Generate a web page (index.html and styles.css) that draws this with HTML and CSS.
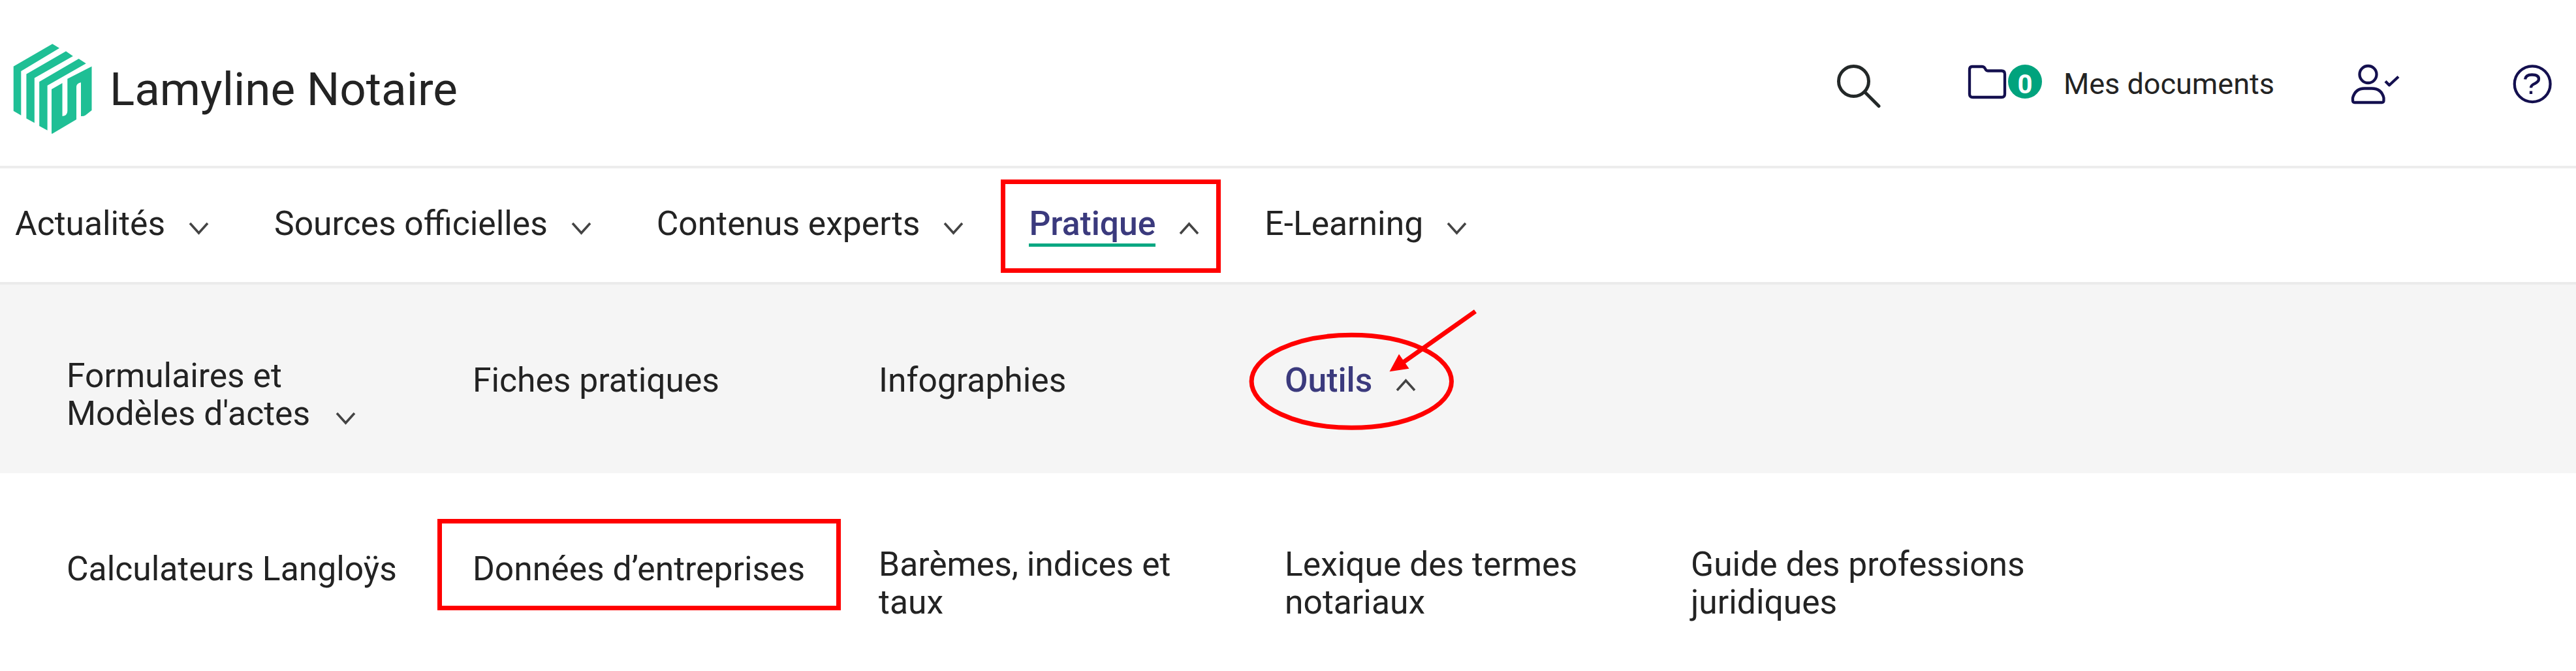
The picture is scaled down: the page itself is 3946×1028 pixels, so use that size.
FILE: index.html
```
<!DOCTYPE html>
<html lang="fr">
<head>
<meta charset="UTF-8">
<title>Lamyline Notaire</title>
<link rel="stylesheet" href="styles.css">
</head>
<body>

<header class="header">
  <a class="brand">
    <svg class="logo" width="122" height="140" viewBox="20 67 122 140">
      <polygon points="80.3,68.3 91,74.8 32.3,110 32.3,177.7 20.7,171 20.7,102.7"/>
      <polygon points="101,79.6 111.8,87 52.8,120.5 52.8,189.2 40.4,182.4 40.4,114.6"/>
      <polygon points="120.6,91 131.8,98.3 72.6,132 72.6,200.7 60.2,194 60.2,126.2"/>
      <path d="M79 137.7 L95.5 128.3 V179 Q103.3 178 103.3 171 V121.7 L140.5 102.7 V170 L131 177.5 Q128 179.5 124 179 V127.3 Q117 129 117 134 V184 L80.3 205.7 H79Z"/>
    </svg>
    <span>Lamyline Notaire</span>
  </a>

  <div class="tools">
    <svg class="search" width="68" height="68" viewBox="0 0 68 68">
      <circle cx="26.5" cy="26.5" r="23"/>
      <path d="M43.5 43 L65 64.5"/>
    </svg>
    <div class="documents">
      <svg class="icon folder" width="64" height="56" viewBox="0 0 64 56">
        <path d="M5 10 Q5 5 9 5 H24 Q27 5 28.5 7.5 L30 10 Q31 11.5 33 11.5 H54 Q59 11.5 59 16.5 V47 Q59 52 54 52 H10 Q5 52 5 47 Z"/>
      </svg>
      <span class="badge">0</span>
      <span class="label">Mes documents</span>
    </div>
    <svg class="icon user" width="78" height="64" viewBox="0 0 78 64">
      <circle cx="27.5" cy="17" r="13"/>
      <path d="M4 57 V53 Q8 38.5 22 38.5 H33 Q48 38.5 51.5 53 V57 Q51.5 60 48.5 60 H7 Q4 60 4 57 Z"/>
      <path d="M54 27.5 L60 33.5 L74 20.5"/>
    </svg>
    <svg class="icon" width="61" height="62" viewBox="0 0 61 62">
      <circle cx="30.2" cy="30.7" r="27.4"/>
      <path d="M19 23.5 Q20 16.5 29.5 16.5 Q40 16.5 40 23 Q40 27 34 30 Q28 32.5 28 36.5"/>
      <path d="M28 41.5 V46"/>
    </svg>
  </div>
</header>

<nav class="main-nav">
  <a>Actualités<svg class="chevron" viewBox="0 0 31 20"><path d="M2 2 L15.5 17 L29 2"/></svg></a>
  <a>Sources officielles<svg class="chevron" viewBox="0 0 31 20"><path d="M2 2 L15.5 17 L29 2"/></svg></a>
  <a>Contenus experts<svg class="chevron" viewBox="0 0 31 20"><path d="M2 2 L15.5 17 L29 2"/></svg></a>
  <a class="active"><span>Pratique</span><svg class="chevron" viewBox="0 0 31 20"><path d="M2 18 L15.5 3 L29 18"/></svg></a>
  <a>E-Learning<svg class="chevron" viewBox="0 0 31 20"><path d="M2 2 L15.5 17 L29 2"/></svg></a>
</nav>

<nav class="sub-nav grey">
  <a>Formulaires et<br>Modèles d'actes<svg class="chevron wide" viewBox="0 0 31 20"><path d="M2 2 L15.5 17 L29 2"/></svg></a>
  <a class="single">Fiches pratiques</a>
  <a class="single">Infographies</a>
  <a class="single outils"><span>Outils</span><svg class="chevron" viewBox="0 0 31 20"><path d="M2 18 L15.5 3 L29 18"/></svg>
    <!-- circle and arrow -->
    <svg class="mark" width="360" height="200" viewBox="0 0 360 200">
      <ellipse cx="160.3" cy="115.3" rx="153.2" ry="71"/>
      <path d="M350 8 L234 90"/>
      <polygon points="218.5,100.3 233,73.5 248.5,95.7"/>
    </svg>
  </a>
</nav>

<nav class="sub-nav">
  <a class="single">Calculateurs Langloÿs</a>
  <a class="single boxed">Données d’entreprises</a>
  <a>Barèmes, indices et taux</a>
  <a>Lexique des termes notariaux</a>
  <a>Guide des professions juridiques</a>
</nav>

</body>
</html>
```
FILE: styles.css
```
*,
*::after {
  box-sizing: border-box;
}

body {
  margin: 0;
  background-color: #fff;
  color: #232323;
  font-family: Roboto, 'Liberation Sans', sans-serif;
  font-size: 51.6px;
}

.header {
  display: flex;
  justify-content: space-between;
  align-items: center;
  height: 258px;
  padding: 3px 36px 0 20px;
  border-bottom: 4px solid #ededed;
}

.brand {
  display: flex;
  align-items: center;
  gap: 26px;
  margin-top: 15px;
  font-size: 71px;
}

.logo {
  fill: #1fbf95;
}

.tools {
  display: flex;
  align-items: center;
}

.search {
  margin-top: 6px;
  margin-right: 131px;
  fill: none;
  stroke: #232828;
  stroke-width: 5;
  stroke-linecap: round;
}

.icon {
  fill: none;
  stroke: #14104f;
  stroke-width: 4.3;
  stroke-linejoin: round;
}

.documents {
  display: flex;
  align-items: center;
  font-size: 45px;
}

.folder,
.badge {
  margin-top: -8px;
}

.badge {
  width: 52px;
  height: 52px;
  padding-top: 5px;
  border-radius: 50%;
  background-color: #00a37d;
  color: #fff;
  font-size: 40px;
  font-weight: bold;
  line-height: 52px;
  text-align: center;
}

.label {
  margin-left: 33px;
}

.user {
  margin-left: 116px;
  margin-right: 171px;
}

.main-nav {
  display: flex;
  align-items: center;
  gap: 100px;
  height: 178px;
  padding: 0 23px 5px;
  border-bottom: 4px solid #ebebeb;
}

.main-nav a {
  position: relative;
}

.chevron {
  width: 31px;
  height: 20px;
  margin-left: 36px;
  fill: none;
  stroke: #444;
  stroke-width: 3.6;
}

.chevron.wide {
  margin-left: 39px;
}

.active span,
.outils span {
  color: #3b3a7d;
  font-weight: 500;
}

.active span {
  box-shadow: 0 5px 0 #0aa782;
}

/* red frames */
.active::after,
.boxed::after {
  content: '';
  position: absolute;
  border: 7px solid #f00;
}

.active::after {
  top: -37px;
  left: -43px;
  width: 337px;
  height: 143px;
}

.sub-nav {
  display: grid;
  grid-template-columns: repeat(5, 622px);
  align-items: start;
  height: 289px;
  padding: 111px 102px 0;
  line-height: 58.3px;
}

.grey {
  background-color: #f5f5f5;
}

.sub-nav a {
  position: relative;
  padding-right: 95px;
}

.sub-nav .single {
  padding-top: 7px;
}

.boxed::after {
  top: -41px;
  left: -54px;
  width: 618px;
  height: 140px;
}

.mark {
  position: absolute;
  top: -78px;
  left: -58px;
  fill: none;
  stroke: #f00;
  stroke-width: 7;
}

.mark polygon {
  fill: #f00;
  stroke: none;
}
```
